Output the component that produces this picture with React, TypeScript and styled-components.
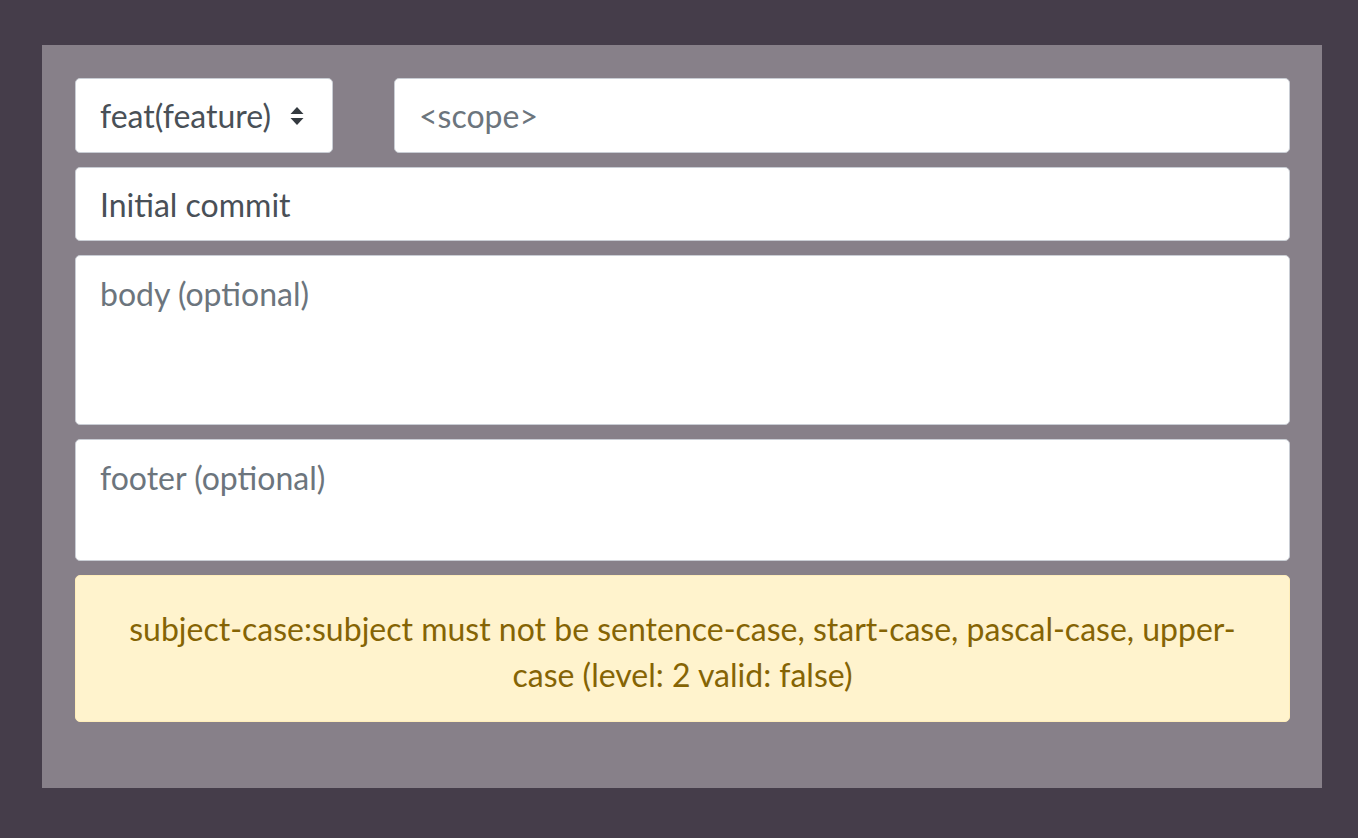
import React from 'react';
import styled, { createGlobalStyle } from 'styled-components';

const GlobalStyle = createGlobalStyle`
  html, body {
    margin: 0;
    padding: 0;
    background: #453d4a;
  }
  body {
    font-family: Lato, "Noto Sans", sans-serif;
  }
`;

const Page = styled.div`
  width: 1358px;
  height: 838px;
  box-sizing: border-box;
  padding: 45px 36px 50px 42px;
`;

const Panel = styled.div`
  width: 1280px;
  height: 743px;
  box-sizing: border-box;
  background: #878089;
  padding: 33px 32px 0 33px;
  display: flex;
  flex-direction: column;
  gap: 14px;
`;

const Row = styled.div`
  display: flex;
  gap: 61px;
`;

const Field = styled.div<{ $h?: number; $w?: number; $grow?: boolean }>`
  box-sizing: border-box;
  height: ${p => p.$h ?? 75}px;
  flex: ${p => (p.$grow ? '1' : 'none')};
  ${p => (p.$w ? `width: ${p.$w}px;` : '')}
  background: #fff;
  border: 1px solid #c9cdd4;
  border-radius: 5px;
  padding: 0 24px;
  display: flex;
  align-items: center;
  font-size: 32px;
  color: #495057;
`;

const Area = styled(Field)`
  align-items: flex-start;
  padding-top: 18px;
  line-height: 40px;
`;

const Placeholder = styled.span`
  color: #6c757d;
`;

const Arrows = styled.svg`
  margin-left: 19px;
  flex: none;
`;

const Alert = styled.div`
  box-sizing: border-box;
  height: 147px;
  flex: none;
  background: #fff3cd;
  border: 1px solid #ffeeba;
  border-radius: 5px;
  color: #856404;
  font-size: 32px;
  line-height: 46px;
  text-align: center;
  padding: 30px 46px 0;
`;

export default function App() {
  return (
    <>
      <GlobalStyle />
      <Page>
        <Panel>
          <Row>
            <Field $w={258}>
              feat(feature)
              <Arrows width="14" height="22" viewBox="0 0 14 22">
                <path d="M7 2 L13.5 9 H0.5 Z" fill="#343a40" />
                <path d="M7 20 L13.5 13 H0.5 Z" fill="#343a40" />
              </Arrows>
            </Field>
            <Field $grow>
              <Placeholder>&lt;scope&gt;</Placeholder>
            </Field>
          </Row>
          <Field $h={74}>Initial commit</Field>
          <Area $h={170}>
            <Placeholder>body (optional)</Placeholder>
          </Area>
          <Area $h={122}>
            <Placeholder>footer (optional)</Placeholder>
          </Area>
          <Alert>
            subject-case:subject must not be sentence-case, start-case, pascal-case, upper-case (level: 2 valid: false)
          </Alert>
        </Panel>
      </Page>
    </>
  );
}
